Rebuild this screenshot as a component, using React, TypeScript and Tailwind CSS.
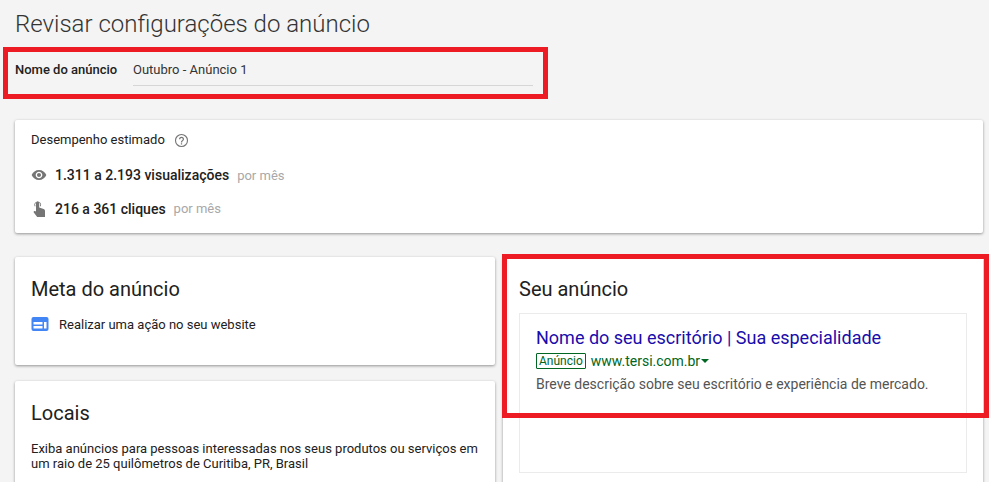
function EyeIcon() {
  return (
    <svg width="16" height="16" viewBox="0 0 24 24" fill="#757575">
      <path d="M12 4.500C7 4.500 2.730 7.610 1 12c1.730 4.390 6 7.500 11 7.500s9.270-3.110 11-7.500c-1.730-4.390-6-7.500-11-7.500zM12 17c-2.760 0-5-2.240-5-5s2.240-5 5-5 5 2.240 5 5-2.240 5-5 5zm0-8c-1.660 0-3 1.340-3 3s1.340 3 3 3 3-1.340 3-3-1.340-3-3-3z" />
    </svg>
  );
}

function TouchIcon() {
  return (
    <svg width="16" height="18" viewBox="0 0 16 18" fill="#757575">
      <path d="M5 6.500V3a1.600 1.600 0 0 1 3.200 0v4.600l4.400 1.300c.8.2 1.400 1 1.400 1.900V17H6.200L2.800 12.400c-.5-.7.2-1.700 1.100-1.300l1.100.5z" />
      <path d="M3.600 6.200a3.400 3.400 0 1 1 6.200 0h-.9a2.600 2.600 0 1 0-4.400 0z" />
    </svg>
  );
}

function WebsiteIcon() {
  return (
    <svg width="18" height="14" viewBox="0 0 18 14" className="mb-[2px]">
      <rect x="0.500" width="17" height="14" rx="2" fill="#4285f4" />
      <rect x="2.500" y="5" width="9" height="2.500" fill="#fff" />
      <rect x="2.500" y="9" width="9" height="2.500" fill="#fff" />
      <rect x="13" y="5" width="2.500" height="6.500" fill="#fff" />
    </svg>
  );
}

function HelpIcon() {
  return (
    <svg width="15" height="15" viewBox="0 0 24 24" fill="#757575">
      <path d="M12 1.500a10.500 10.500 0 1 0 0 21 10.500 10.500 0 0 0 0-21zm0 19.200a8.700 8.700 0 1 1 0-17.400 8.700 8.700 0 0 1 0 17.400z" />
      <path d="M11 16.500h2v2h-2zM12 6a4 4 0 0 0-4 4h2a2 2 0 1 1 4 0c0 2-3 1.750-3 5h2c0-2.250 3-2.500 3-5a4 4 0 0 0-4-4z" />
    </svg>
  );
}

export default function App() {
  return (
    <div className="relative h-[482px] overflow-hidden bg-[#f4f4f4] font-['Roboto',sans-serif] text-[#212121]">
      <div className="pl-[15px] pr-[6px] pt-[8px]">
        <h1 className="text-[24px] leading-[32px] font-light text-[#333333]">Revisar configurações do anúncio</h1>

        {/* Nome */}
        <div className="mt-[13px] flex h-[45px] items-start pt-[7px]">
          <span className="w-[118px] text-[13px] leading-[20px] font-medium">Nome do anúncio</span>
          <div className="h-[26px] w-[400px] border-b border-[#d6d6d6] text-[13px] leading-[20px] text-[#333333]">Outubro - Anúncio 1</div>
        </div>

        {/* Desempenho */}
        <div className="mt-[22px] h-[113px] rounded-[2px] bg-white pl-[16px] pt-[10px] shadow-[0_1px_3px_rgba(0,0,0,0.4)]">
          <div className="flex items-center gap-[9px] text-[13px] leading-[20px] text-[#212121]">
            Desempenho estimado
            <HelpIcon />
          </div>
          <div className="mt-[15px] flex items-center text-[14px] leading-[20px] font-medium">
            <span className="flex w-[24px] items-center"><EyeIcon /></span>
            1.311 a 2.193 visualizações
            <span className="ml-[8px] translate-y-px text-[13px] font-normal text-[#a8a8a8]">por mês</span>
          </div>
          <div className="mt-[14px] flex items-center text-[14px] leading-[20px] font-medium">
            <span className="flex w-[24px] items-center"><TouchIcon /></span>
            216 a 361 cliques
            <span className="ml-[8px] text-[13px] font-normal text-[#a8a8a8]">por mês</span>
          </div>
        </div>

        <div className="mt-[24px] flex gap-[8px]">
          {/* Coluna esquerda */}
          <div className="flex w-[480px] flex-col gap-[16px]">
            <div className="h-[108px] rounded-[2px] bg-white pl-[16px] pt-[18px] shadow-[0_1px_3px_rgba(0,0,0,0.4)]">
              <h2 className="text-[20px] leading-[28px] text-[#212121]">Meta do anúncio</h2>
              <div className="mt-[12px] flex items-center gap-[10px] text-[13px] leading-[20px]">
                <WebsiteIcon />
                Realizar uma ação no seu website
              </div>
            </div>
            <div className="h-[140px] rounded-[2px] bg-white pl-[16px] pr-[12px] pt-[18px] shadow-[0_1px_3px_rgba(0,0,0,0.4)]">
              <h2 className="text-[20px] leading-[28px] text-[#212121]">Locais</h2>
              <p className="mt-[14px] text-[13px] leading-[15px]">
                Exiba anúncios para pessoas interessadas nos seus produtos ou serviços em um raio de 25 quilômetros de Curitiba, PR, Brasil
              </p>
            </div>
          </div>

          {/* Seu anúncio */}
          <div className="h-[260px] w-[480px] rounded-[2px] bg-white px-[16px] pt-[18px] shadow-[0_1px_3px_rgba(0,0,0,0.4)]">
            <h2 className="text-[20px] leading-[28px] text-[#212121]">Seu anúncio</h2>
            <div className="mt-[10px] h-[160px] border border-[#ebebeb] pl-[16px] pt-[12px]">
              <div className="text-[18px] leading-[24px] text-[#1a0dab]">Nome do seu escritório | Sua especialidade</div>
              <div className="mt-[1px] flex items-center text-[14px] leading-[20px] text-[#006621]">
                <span className="mr-[5px] rounded-[1px] border border-[#006621] px-[2px] text-[12px] leading-[14px]">Anúncio</span>
                www.tersi.com.br
                <span className="ml-[1px] h-0 w-0 border-x-[4px] border-t-[4px] border-x-transparent border-t-[#006621]" />
              </div>
              <div className="mt-[3px] text-[14px] leading-[20px] text-[#545454]">Breve descrição sobre seu escritório e experiência de mercado.</div>
            </div>
          </div>
        </div>
      </div>

      {/* Marcações vermelhas por cima */}
      <div className="absolute left-[3px] top-[47px] h-[52px] w-[545px] border-[5px] border-[#ed1c24]" />
      <div className="absolute left-[502px] top-[254px] h-[164px] w-[487px] border-[5px] border-[#ed1c24]" />
    </div>
  );
}
